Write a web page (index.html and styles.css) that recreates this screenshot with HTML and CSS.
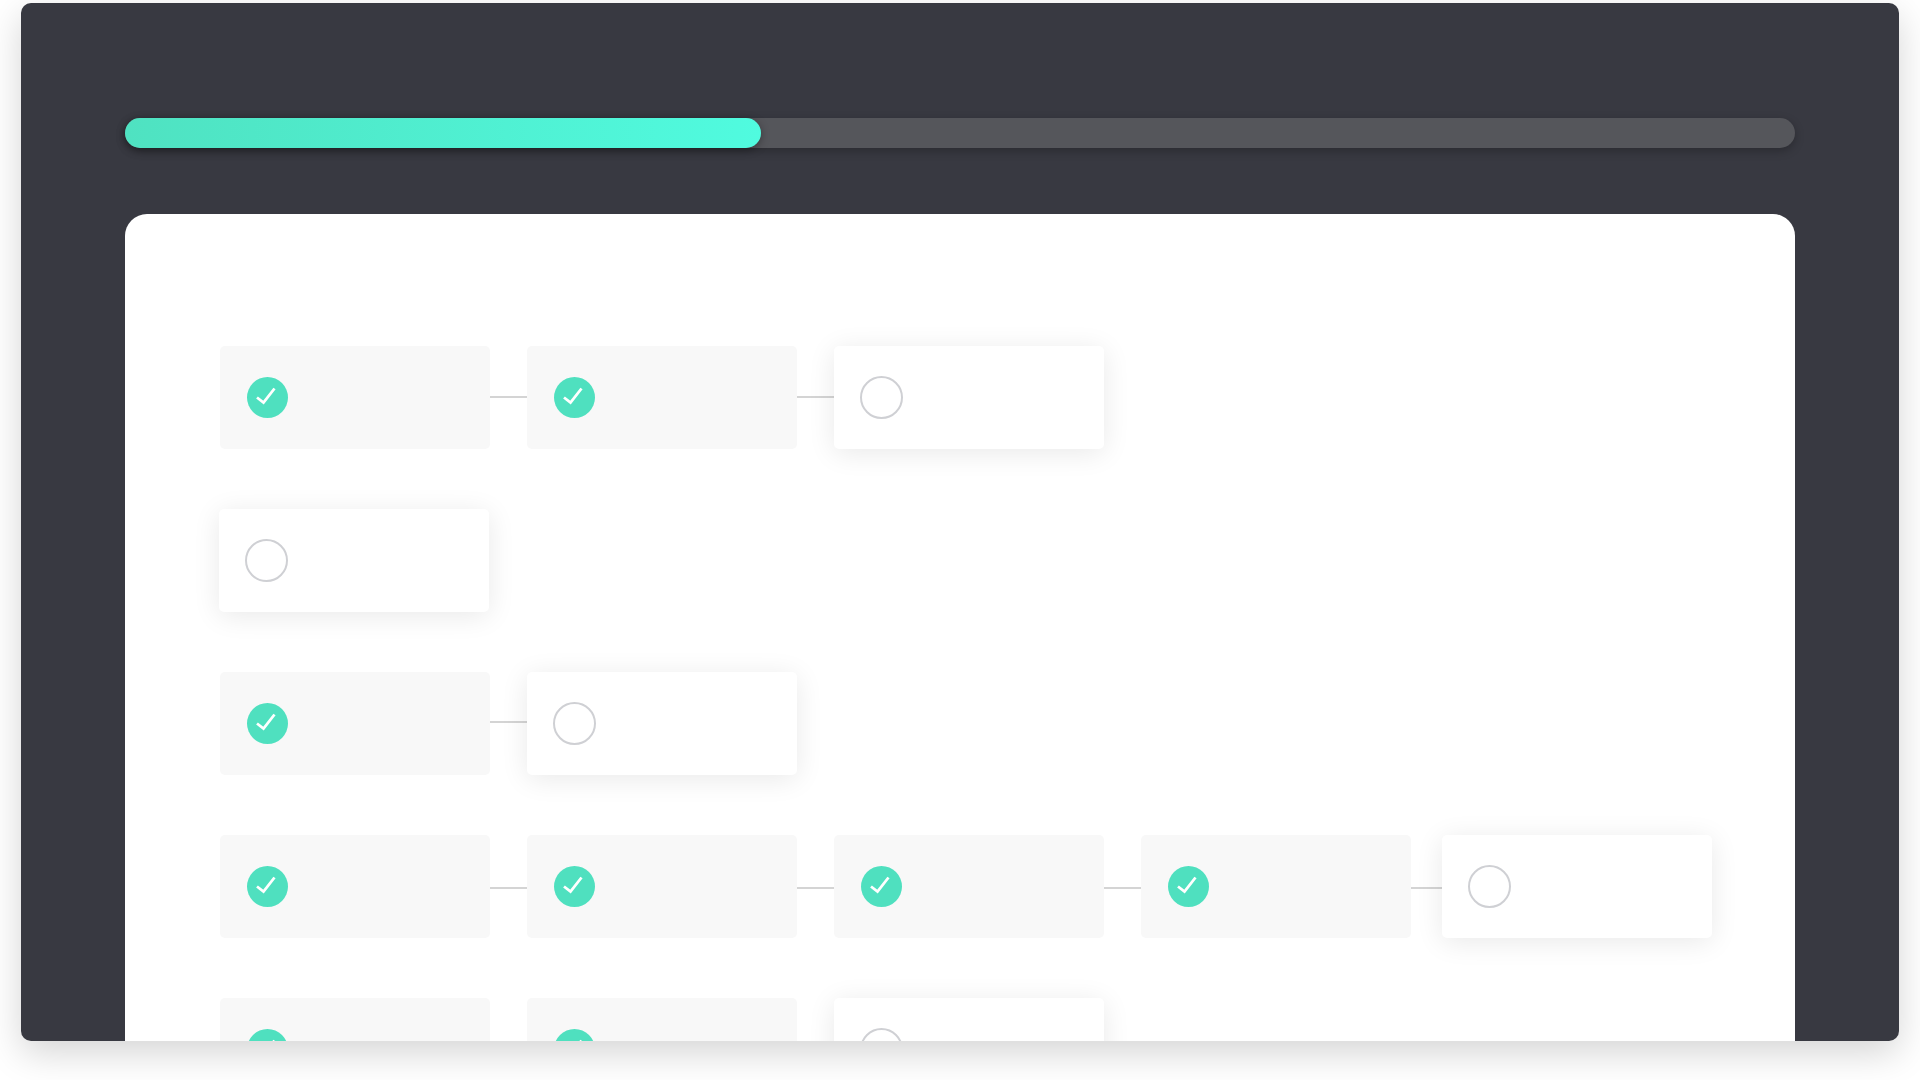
FILE: index.html
```html
<!DOCTYPE html>
<html lang="en">
<head>
    <meta charset="UTF-8">
    <meta name="viewport" content="width=device-width, initial-scale=1.0">
    <title>Progress</title>
    <link rel="stylesheet" href="styles.css">
</head>
<body>
    <svg class="sprite" aria-hidden="true">
        <symbol id="check" viewBox="0 0 41 41">
            <circle cx="20.5" cy="20.5" r="20.5" fill="#4fe0bf"/>
            <path d="M10 20.5l6.5 5L27.5 11.5" fill="none" stroke="#fff" stroke-width="2.8"/>
        </symbol>
    </svg>

    <div class="window">
        <div class="progress">
            <div class="progress-fill"></div>
        </div>

        <div class="panel">
            <div class="row row-one">
                <div class="card done"><svg class="check"><use href="#check"/></svg></div>
                <div class="link"></div>
                <div class="card done"><svg class="check"><use href="#check"/></svg></div>
                <div class="link"></div>
                <div class="card active"><div class="circle"></div></div>
            </div>

            <div class="row">
                <div class="card active first"><div class="circle"></div></div>
            </div>

            <div class="row row-three">
                <div class="card done"><svg class="check"><use href="#check"/></svg></div>
                <div class="link"></div>
                <div class="card active"><div class="circle"></div></div>
            </div>

            <div class="row row-four">
                <div class="card done"><svg class="check"><use href="#check"/></svg></div>
                <div class="link"></div>
                <div class="card done"><svg class="check"><use href="#check"/></svg></div>
                <div class="link"></div>
                <div class="card done"><svg class="check"><use href="#check"/></svg></div>
                <div class="link"></div>
                <div class="card done"><svg class="check"><use href="#check"/></svg></div>
                <div class="link short"></div>
                <div class="card active"><div class="circle"></div></div>
            </div>

            <div class="row">
                <div class="card done"><svg class="check"><use href="#check"/></svg></div>
                <div class="link"></div>
                <div class="card done"><svg class="check"><use href="#check"/></svg></div>
                <div class="link"></div>
                <div class="card active"><div class="circle"></div></div>
            </div>
        </div>
    </div>
</body>
</html>
```

FILE: styles.css
```css
html, body {
    height: 100%;
}
body {
    box-sizing: border-box;
    margin: 0;
    padding: 3px 21px 39px;
    background-color: #fff;
    overflow: hidden;
}
.sprite {
    display: none;
}
.window {
    box-sizing: border-box;
    display: flex;
    flex-direction: column;
    height: 1038px;
    padding: 115px 104px 0;
    background-color: #383941;
    border-radius: 10px;
    box-shadow: 0 12px 36px rgba(0,0,0,0.17);
    overflow: hidden;
}
.progress {
    flex: none;
    height: 30px;
    margin-bottom: 66px;
    background-color: #55565b;
    border-radius: 15px;
    box-shadow: 0 3px 10px rgba(0,0,0,0.25);
}
.progress-fill {
    width: 636px;
    height: 100%;
    background-image: linear-gradient(90deg, #4fe2c1, #50fbdf);
    border-radius: 15px;
    box-shadow: 0 2px 8px rgba(0,0,0,0.35);
}
.panel {
    flex: 1;
    display: flex;
    flex-direction: column;
    gap: 60px;
    padding: 132px 0 0 95px;
    background-color: #fff;
    border-radius: 22px 22px 0 0;
    overflow: hidden;
}
.row {
    flex: none;
    display: flex;
    align-items: center;
    height: 103px;
}
.card {
    box-sizing: border-box;
    display: flex;
    align-items: center;
    flex: none;
    width: 270px;
    height: 103px;
    padding-left: 27px;
    border-radius: 5px;
}
.done {
    background-color: #f8f8f8;
}
.active {
    padding-left: 26px;
    background-color: #fff;
    box-shadow: 0 4px 28px rgba(0,0,0,0.09);
}
.first {
    margin-left: -1px;
}
.link {
    flex: none;
    width: 37px;
    height: 2px;
    background-color: #d4d4d4;
}
.row-one .link {
    margin-bottom: 2px;
}
.row-three .link {
    margin-bottom: 4px;
}
.row-four .link {
    margin-top: 2px;
}
.short {
    width: 31px;
}
.check {
    width: 41px;
    height: 41px;
}
.circle {
    box-sizing: border-box;
    width: 43px;
    height: 43px;
    border: 2px solid #cfd0d4;
    border-radius: 50%;
}
```
